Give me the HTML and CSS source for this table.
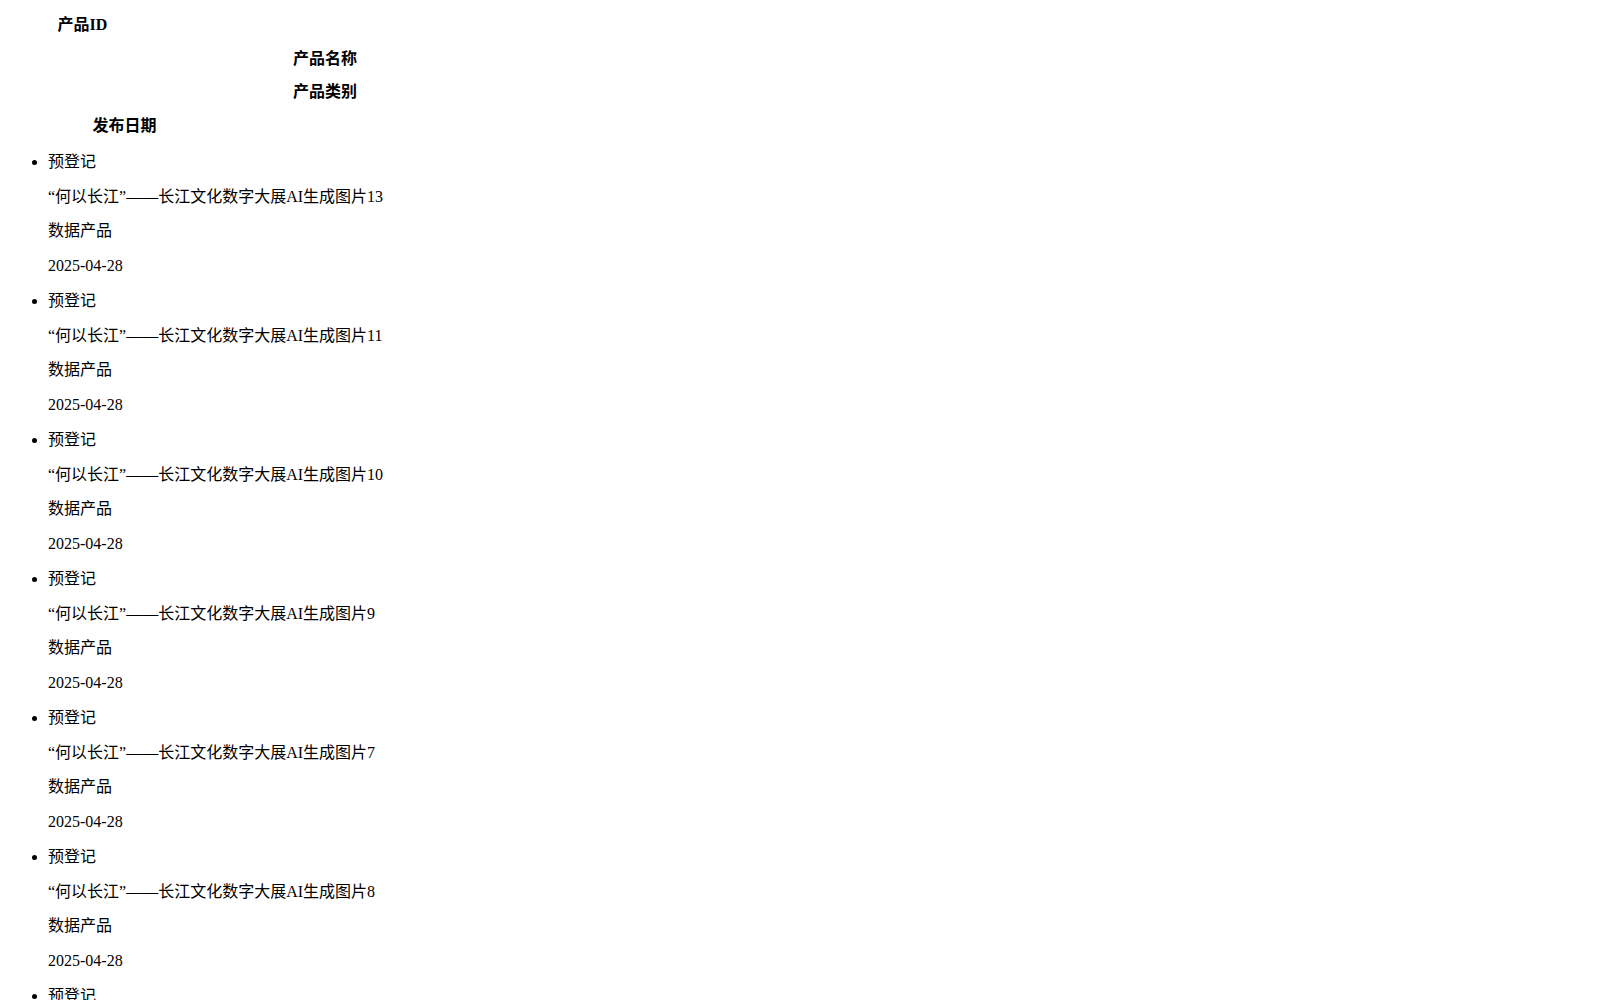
FILE: index.html
```html
<!DOCTYPE html>
<html lang="zh-CN">
<head>
    <meta charset="UTF-8">
    <meta name="viewport" content="width=device-width, initial-scale=1.0">
    <title>产品列表</title>
    <link rel="stylesheet" href="styles.css">
</head>
<body>
    <!-- table head -->
    <div class="list-head">
        <div class="head-cell cell-id">产品ID</div>
        <div class="head-cell cell-name">产品名称</div>
        <div class="head-cell cell-type">产品类别</div>
        <div class="head-cell cell-date">发布日期</div>
    </div>

    <ul class="product-list">
        <li>
            <div class="row-cell">预登记</div>
            <div class="row-cell">“何以长江”——长江文化数字大展AI生成图片13</div>
            <div class="row-cell">数据产品</div>
            <div class="row-cell">2025-04-28</div>
        </li>
        <li>
            <div class="row-cell">预登记</div>
            <div class="row-cell">“何以长江”——长江文化数字大展AI生成图片11</div>
            <div class="row-cell">数据产品</div>
            <div class="row-cell">2025-04-28</div>
        </li>
        <li>
            <div class="row-cell">预登记</div>
            <div class="row-cell">“何以长江”——长江文化数字大展AI生成图片10</div>
            <div class="row-cell">数据产品</div>
            <div class="row-cell">2025-04-28</div>
        </li>
        <li>
            <div class="row-cell">预登记</div>
            <div class="row-cell">“何以长江”——长江文化数字大展AI生成图片9</div>
            <div class="row-cell">数据产品</div>
            <div class="row-cell">2025-04-28</div>
        </li>
        <li>
            <div class="row-cell">预登记</div>
            <div class="row-cell">“何以长江”——长江文化数字大展AI生成图片7</div>
            <div class="row-cell">数据产品</div>
            <div class="row-cell">2025-04-28</div>
        </li>
        <li>
            <div class="row-cell">预登记</div>
            <div class="row-cell">“何以长江”——长江文化数字大展AI生成图片8</div>
            <div class="row-cell">数据产品</div>
            <div class="row-cell">2025-04-28</div>
        </li>
        <li>
            <div class="row-cell">预登记</div>
            <div class="row-cell">“何以长江”——长江文化数字大展AI生成图片12</div>
            <div class="row-cell">数据产品</div>
            <div class="row-cell">2025-04-28</div>
        </li>
        <li>
            <div class="row-cell">预登记</div>
            <div class="row-cell">“何以长江”——长江文化数字大展AI生成图片6</div>
            <div class="row-cell">数据产品</div>
            <div class="row-cell">2025-04-28</div>
        </li>
        <li>
            <div class="row-cell">预登记</div>
            <div class="row-cell">“何以长江”——长江文化数字大展AI生成图片5</div>
            <div class="row-cell">数据产品</div>
            <div class="row-cell">2025-04-28</div>
        </li>
        <li>
            <div class="row-cell">预登记</div>
            <div class="row-cell">“何以长江”——长江文化数字大展AI生成图片4</div>
            <div class="row-cell">数据产品</div>
            <div class="row-cell">2025-04-28</div>
        </li>
        <li>
            <div class="row-cell">预登记</div>
            <div class="row-cell">“何以长江”——长江文化数字大展AI生成图片3</div>
            <div class="row-cell">数据产品</div>
            <div class="row-cell">2025-04-28</div>
        </li>
        <li>
            <div class="row-cell">预登记</div>
            <div class="row-cell">“何以长江”——长江文化数字大展AI生成图片2</div>
            <div class="row-cell">数据产品</div>
            <div class="row-cell">2025-04-28</div>
        </li>
    </ul>
</body>
</html>
```

FILE: styles.css
```css
html {
    overflow-y: scroll;
}
body {
    margin: 8px;
    font-family: "Liberation Serif", "Noto Sans CJK SC", serif;
    font-size: 16px;
    color: #000;
    background-color: #fff;
}

/* Header cells */
.list-head {
    margin-bottom: 2px;
}
.head-cell {
    font-weight: bold;
    text-align: center;
    line-height: 33.7px;
}
.cell-id {
    width: 149px;
}
.cell-name,
.cell-type {
    width: 634px;
}
.cell-date {
    width: 233px;
}

/* List rows */
.product-list {
    margin: 0;
    padding-left: 40px;
}
.row-cell {
    line-height: 34.75px;
}

/* Page scrollbar */
::-webkit-scrollbar {
    width: 15px;
    background-color: #f1f1f1;
}
::-webkit-scrollbar-thumb {
    background-color: #c1c1c1;
    border: 2px solid #f1f1f1;
}
::-webkit-scrollbar-button:single-button {
    height: 16px;
    background-color: #f1f1f1;
}
```
